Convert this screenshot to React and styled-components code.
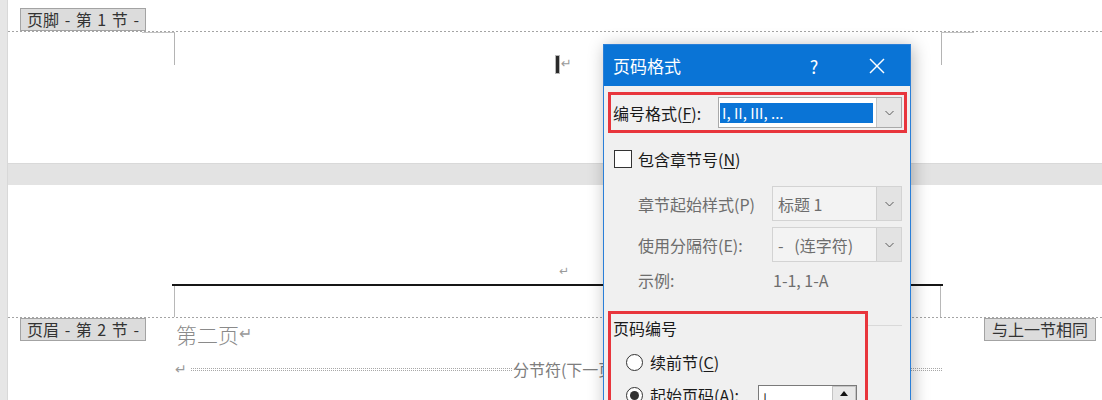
import React from 'react';
import styled, { createGlobalStyle } from 'styled-components';

const GlobalStyle = createGlobalStyle`
  html, body { margin: 0; padding: 0; background: #fff; }
  body { font-family: 'Noto Sans CJK SC', 'Noto Sans', sans-serif; }
`;

// document area

const Screen = styled.div`
  position: relative;
  width: 1102px;
  height: 400px;
  overflow: hidden;
  display: flex;
  background: #e4e4e4;
`;

const SideGutter = styled.div`
  flex: none;
  width: 7px;
  background: #e6e6e6;
  border-right: 1px solid #d8d8d8;
`;

const Document = styled.div`
  flex: 1;
  display: flex;
  flex-direction: column;
`;

const Page = styled.div`
  background: #fff;
  display: flex;
  flex-direction: column;
  height: ${(p) => (p.$height ? `${p.$height}px` : 'auto')};
  flex: ${(p) => (p.$height ? 'none' : '1')};
`;

const PageGap = styled.div`
  flex: none;
  height: 22px;
  background: #e3e3e3;
  border-top: 1px solid #d9d9d9;
  box-sizing: border-box;
`;

const TabRow = styled.div`
  display: flex;
  align-items: ${(p) => (p.$top ? 'flex-start' : 'flex-end')};
  height: ${(p) => (p.$top ? 'auto' : '31px')};
  padding: 0 6px 0 12px;
`;

const SectionTab = styled.div`
  flex: none;
  box-sizing: border-box;
  width: ${(p) => p.$width}px;
  height: 23px;
  background: #dcdcdc;
  border: 1px solid #a3a3a3;
  color: #333;
  font-size: 16px;
  line-height: 21px;
  word-spacing: ${(p) => p.$spread || 0}px;
  text-align: center;
  white-space: pre;
`;

const DashedRule = styled.div`
  flex: none;
  height: 1px;
  background: repeating-linear-gradient(90deg, #a4a4a4 0 2px, transparent 2px 4px);
`;

const MarginRow = styled.div`
  display: flex;
  padding-left: 134px;
`;

const Corner = styled.div`
  flex: none;
  width: 32px;
  height: 32px;
  border-top: 1px solid #c4c4c4;
  border-${(p) => p.$side}: 1px solid #b4b4b4;
`;

const MarginBody = styled.div`
  flex: none;
  width: 766px;
  padding: 22px 0 0 381px;
  box-sizing: border-box;
  display: flex;
  align-items: center;
  height: 42px;
`;

const Caret = styled.span`
  display: inline-block;
  width: 3px;
  height: 17px;
  background: #2a2a2a;
  box-shadow: 0 0 0 1px #b8b8b8;
`;

const ReturnMark = styled.span`
  color: #9a9a9a;
  font-family: 'DejaVu Sans', sans-serif;
  font-size: ${(p) => p.$size || 12}px;
  line-height: 14px;
  margin-left: ${(p) => p.$gap || 0}px;
`;

const ReturnRow = styled.div`
  flex: none;
  height: 99px;
  display: flex;
  align-items: flex-end;
  padding: 0 0 6px 551px;
  box-sizing: border-box;
`;

const HeaderFrame = styled.div`
  flex: none;
  margin-left: 164px;
  width: 771px;
  border-top: 2px solid #161616;
`;

const HeaderMarks = styled.div`
  margin: 0 2px;
  height: 31px;
  border-left: 1px solid #b8b8b8;
  border-right: 1px solid #b8b8b8;
`;

const PageText = styled.div`
  margin: 4px 0 0 30px;
  font-size: 21px;
  line-height: 24px;
  color: #8a8a8a;
  font-weight: 300;
  display: flex;
  align-items: center;
`;

const Spacer = styled.div`
  flex: 1;
`;

const BreakRow = styled.div`
  display: flex;
  align-items: center;
  margin: 13px 0 0 167px;
  width: 767px;
  height: 20px;
`;

const BreakLine = styled.div`
  flex: 1;
  height: 1px;
  border-top: 1px dotted #a8a8a8;
  border-bottom: 1px dotted #a8a8a8;
  margin-left: ${(p) => p.$gap || 0}px;
`;

const BreakText = styled.span`
  font-size: 16px;
  line-height: 20px;
  color: #7d7d7d;
  padding: 0 1px;
`;

// dialog

const Dialog = styled.div`
  position: absolute;
  left: 603px;
  top: 44px;
  width: 308px;
  height: 372px;
  box-sizing: border-box;
  background: #f0f0f0;
  border: 1px solid #2a7fd8;
  box-shadow: 2px 2px 16px rgba(0, 0, 0, 0.28);
  display: flex;
  flex-direction: column;
`;

const TitleBar = styled.div`
  flex: none;
  height: 41px;
  background: #0a74d6;
  color: #fff;
  display: flex;
  align-items: center;
  padding-left: 9px;
`;

const Title = styled.div`
  flex: 1;
  font-size: 17px;
  line-height: 20px;
`;

const TitleButton = styled.div`
  width: 46px;
  height: 41px;
  display: flex;
  align-items: center;
  justify-content: center;
  font-size: 18px;
  margin-right: ${(p) => p.$gap || 0}px;
`;

const DialogBody = styled.div`
  flex: 1;
  display: flex;
  flex-direction: column;
  padding: 6px 3px 0 4px;
  font-size: 16px;
  color: #1a1a1a;
`;

const RedBox = styled.div`
  flex: none;
  box-sizing: border-box;
  width: ${(p) => p.$width}px;
  height: ${(p) => p.$height}px;
  border: 3px solid #e8353c;
  padding-left: 2px;
  display: flex;
  flex-direction: ${(p) => (p.$column ? 'column' : 'row')};
  align-items: ${(p) => (p.$column ? 'stretch' : 'center')};
`;

const FieldRow = styled.div`
  flex: none;
  display: flex;
  align-items: center;
  height: ${(p) => p.$height || 20}px;
  margin-top: ${(p) => p.$top || 0}px;
  padding-left: ${(p) => p.$indent || 0}px;
  color: ${(p) => (p.$disabled ? '#6d6d6d' : '#1a1a1a')};
`;

const FieldLabel = styled.span`
  flex: none;
  width: ${(p) => p.$width}px;
  line-height: 20px;
  white-space: nowrap;
`;

const Select = styled.div`
  flex: none;
  display: flex;
  box-sizing: border-box;
  width: ${(p) => p.$width}px;
  height: ${(p) => p.$height}px;
  background: ${(p) => (p.$disabled ? '#f3f3f3' : '#fff')};
  border: 1px solid ${(p) => (p.$disabled ? '#d3d3d3' : '#a9a9a9')};
`;

const SelectValue = styled.div`
  flex: 1;
  display: flex;
  align-items: center;
  padding-left: 5px;
  color: ${(p) => (p.$disabled ? '#6d6d6d' : '#1a1a1a')};
  line-height: 20px;
  white-space: pre;
`;

const Highlight = styled.div`
  flex: 1;
  margin: 5px 3px 4px 1px;
  background: #0a74d6;
  color: #fff;
  font-size: 15px;
  line-height: 20px;
  padding-left: 2px;
`;

const DropButton = styled.div`
  flex: none;
  width: 24px;
  display: flex;
  align-items: center;
  justify-content: center;
  background: ${(p) => (p.$disabled ? '#e3e3e3' : '#e6e6e6')};
  border-left: 1px solid ${(p) => (p.$disabled ? '#cfcfcf' : '#c6c6c6')};
`;

const CheckBox = styled.span`
  flex: none;
  box-sizing: border-box;
  width: 18px;
  height: 18px;
  border: 1px solid #333;
  background: #fff;
  margin-right: 6px;
`;

const Radio = styled.span`
  flex: none;
  box-sizing: border-box;
  width: 17px;
  height: 17px;
  border-radius: 50%;
  border: 1px solid #333;
  background: #fff;
  margin-right: 7px;
  display: flex;
  align-items: center;
  justify-content: center;
  &::after {
    content: '';
    display: ${(p) => (p.$checked ? 'block' : 'none')};
    width: 9px;
    height: 9px;
    border-radius: 50%;
    background: #333;
  }
`;

const Underline = styled.span`
  text-decoration: underline;
  text-underline-offset: 2px;
`;

const NumberingSection = styled.div`
  flex: none;
  display: flex;
  margin-top: 21px;
`;

const GroupLine = styled.div`
  flex: 1;
  height: 0;
  margin: 14px 5px 0 0;
  border-top: 1px solid #d9d9d9;
`;

const GroupTitle = styled.div`
  height: 28px;
  line-height: 28px;
`;

const SpinInput = styled.div`
  flex: none;
  display: flex;
  box-sizing: border-box;
  width: 99px;
  height: 30px;
  background: #fff;
  border: 1px solid #7a7a7a;
  margin-top: 10px;
`;

const SpinText = styled.div`
  flex: 1;
  padding: 4px 0 0 4px;
  font-size: 15px;
  line-height: 20px;
`;

const SpinButtons = styled.div`
  flex: none;
  width: 24px;
  display: flex;
  flex-direction: column;
`;

const SpinButton = styled.div`
  height: 13px;
  background: #e8e8e8;
  border: 1px solid #c4c4c4;
  display: flex;
  align-items: center;
  justify-content: center;
`;

const Chevron = () => (
  <svg width="9" height="6" viewBox="0 0 9 6">
    <polyline points="0.5,1 4.5,5 8.5,1" fill="none" stroke="#5a5a5a" strokeWidth="1" />
  </svg>
);

const CloseGlyph = () => (
  <svg width="16" height="16" viewBox="0 0 16 16">
    <line x1="1" y1="1" x2="15" y2="15" stroke="#fff" strokeWidth="1.4" />
    <line x1="15" y1="1" x2="1" y2="15" stroke="#fff" strokeWidth="1.4" />
  </svg>
);

const UpArrow = () => (
  <svg width="8" height="5" viewBox="0 0 8 5">
    <polygon points="0,5 4,0 8,5" fill="#111" />
  </svg>
);

function PageNumberDialog() {
  return (
    <Dialog>
      <TitleBar>
        <Title>页码格式</Title>
        <TitleButton $gap={17}>?</TitleButton>
        <TitleButton $gap={10}>
          <CloseGlyph />
        </TitleButton>
      </TitleBar>
      <DialogBody>
        <RedBox $width={299} $height={41}>
          <FieldLabel $width={105}>
            编号格式(<Underline>F</Underline>):
          </FieldLabel>
          <Select $width={184} $height={31}>
            <Highlight>I, II, III, ...</Highlight>
            <DropButton>
              <Chevron />
            </DropButton>
          </Select>
        </RedBox>

        <FieldRow $top={17} $height={18} $indent={6}>
          <CheckBox />
          <span>
            包含章节号(<Underline>N</Underline>)
          </span>
        </FieldRow>

        <FieldRow $top={18} $height={35} $indent={30} $disabled>
          <FieldLabel $width={134}>章节起始样式(P)</FieldLabel>
          <Select $width={130} $height={35} $disabled>
            <SelectValue $disabled>标题 1</SelectValue>
            <DropButton $disabled>
              <Chevron />
            </DropButton>
          </Select>
        </FieldRow>

        <FieldRow $top={6} $height={35} $indent={30} $disabled>
          <FieldLabel $width={134}>使用分隔符(E):</FieldLabel>
          <Select $width={130} $height={35} $disabled>
            <SelectValue $disabled>{'-   (连字符)'}</SelectValue>
            <DropButton $disabled>
              <Chevron />
            </DropButton>
          </Select>
        </FieldRow>

        <FieldRow $top={8} $height={20} $indent={30} $disabled>
          <FieldLabel $width={135}>示例:</FieldLabel>
          <span>1-1, 1-A</span>
        </FieldRow>

        <NumberingSection>
          <RedBox $width={260} $height={110} $column>
            <GroupTitle>页码编号</GroupTitle>
            <FieldRow $top={10} $height={20} $indent={13}>
              <Radio />
              <span>
                续前节(<Underline>C</Underline>)
              </span>
            </FieldRow>
            <FieldRow $top={13} $height={20} $indent={13}>
              <Radio $checked />
              <FieldLabel $width={108}>
                起始页码(<Underline>A</Underline>):
              </FieldLabel>
              <SpinInput>
                <SpinText>|</SpinText>
                <SpinButtons>
                  <SpinButton>
                    <UpArrow />
                  </SpinButton>
                </SpinButtons>
              </SpinInput>
            </FieldRow>
          </RedBox>
          <GroupLine />
        </NumberingSection>
      </DialogBody>
    </Dialog>
  );
}

export default function App() {
  return (
    <>
      <GlobalStyle />
      <Screen>
        <SideGutter />
        <Document>
          <Page $height={163}>
            <TabRow>
              <SectionTab $width={126} $spread={2}>页脚 - 第 1 节 -</SectionTab>
            </TabRow>
            <DashedRule />
            <MarginRow>
              <Corner $side="right" />
              <MarginBody>
                <Caret />
                <ReturnMark $size={13} $gap={2}>
                  ↵
                </ReturnMark>
              </MarginBody>
              <Corner $side="left" />
            </MarginRow>
          </Page>
          <PageGap />
          <Page>
            <ReturnRow>
              <ReturnMark $size={12}>↵</ReturnMark>
            </ReturnRow>
            <HeaderFrame>
              <HeaderMarks />
            </HeaderFrame>
            <DashedRule />
            <TabRow $top>
              <SectionTab $width={126} $spread={2}>页眉 - 第 2 节 -</SectionTab>
              <PageText>
                第二页
                <ReturnMark $size={16}>↵</ReturnMark>
              </PageText>
              <Spacer />
              <SectionTab $width={112}>与上一节相同</SectionTab>
            </TabRow>
            <BreakRow>
              <ReturnMark $size={14}>↵</ReturnMark>
              <BreakLine $gap={4} />
              <BreakText>分节符(下一页)</BreakText>
              <BreakLine />
            </BreakRow>
          </Page>
        </Document>
        <PageNumberDialog />
      </Screen>
    </>
  );
}
